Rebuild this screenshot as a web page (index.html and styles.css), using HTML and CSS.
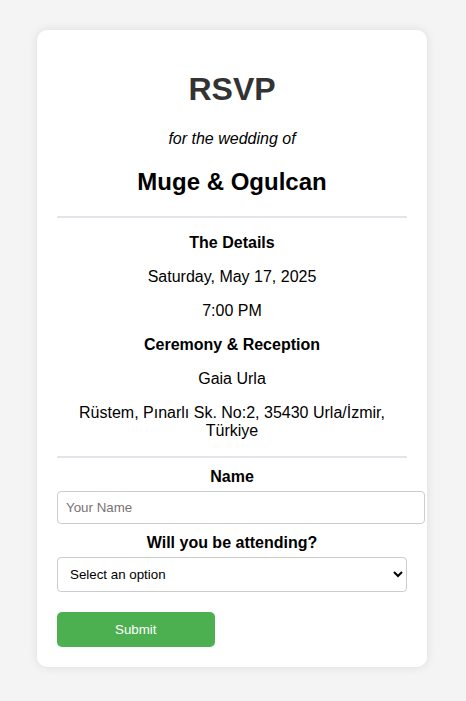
FILE: index.html
```html
<!DOCTYPE html>
<html lang="en">
<head>
<meta charset="utf-8">
<title>RSVP</title>
<link rel="stylesheet" href="styles.css">
</head>
<body>
<div class="card">
  <h1 class="title">RSVP</h1>
  <p class="sub">for the wedding of</p>
  <h2 class="names">Muge &amp; Ogulcan</h2>
  <hr class="rule">
  <p class="strong">The Details</p>
  <p>Saturday, May 17, 2025</p>
  <p>7:00 PM</p>
  <p class="strong">Ceremony &amp; Reception</p>
  <p>Gaia Urla</p>
  <p>Rüstem, Pınarlı Sk. No:2, 35430 Urla/İzmir, Türkiye</p>
  <hr class="rule rule-last">
  <form class="form">
    <label class="label" for="name">Name</label>
    <input class="input" id="name" type="text" placeholder="Your Name">
    <label class="label" for="attend">Will you be attending?</label>
    <select class="select" id="attend">
      <option>Select an option</option>
      <option>Yes</option>
      <option>No</option>
    </select>
    <button class="submit" type="button">Submit</button>
  </form>
</div>
</body>
</html>
```

FILE: styles.css
```css
html, body {
  margin: 0;
  padding: 0;
}
body {
  background: #f4f4f4;
  font-family: "Liberation Sans", Arial, sans-serif;
  color: #000;
  padding: 30px 0;
}
.card {
  width: 350px;
  margin: 0 auto;
  padding: 20px;
  background: #fff;
  border-radius: 10px;
  box-shadow: 0 0 10px rgba(0, 0, 0, 0.1);
  text-align: center;
  position: relative;
  left: -1px;
}
.card p {
  font-size: 16px;
  margin: 16px 0;
}
.title {
  font-size: 32px;
  color: #333;
  margin: 21.44px 0;
}
.sub {
  font-style: italic;
}
.names {
  font-size: 24px;
  margin: 19.92px 0;
}
.card p.strong {
  font-weight: bold;
}
.rule {
  border: 0;
  border-top: 2px solid #e2e5e9;
  margin: 8px 0;
  height: 0;
}
.card .rule-last {
  margin-bottom: 10.5px;
}
.form {
  margin: 0;
}
.label {
  display: block;
  font-weight: bold;
  font-size: 16px;
  margin-bottom: 5px;
}
.input {
  display: block;
  width: 100%;
  padding: 8px;
  margin: 0 0 10px;
  border: 1px solid #ccc;
  border-radius: 4px;
  font-family: "Liberation Sans", Arial, sans-serif;
  font-size: 13.333px;
}
.input::placeholder {
  color: #757575;
}
.select {
  display: block;
  width: 100%;
  padding: 8px;
  margin: 0 0 20px;
  border: 1px solid #ccc;
  border-radius: 4px;
  font-family: "Liberation Sans", Arial, sans-serif;
  font-size: 13.333px;
  background: #fff;
  color: #000;
}
.submit {
  display: block;
  width: 45%;
  padding: 10px 20px;
  border: 0;
  border-radius: 5px;
  background: #4caf50;
  color: #fff;
  font-family: "Liberation Sans", Arial, sans-serif;
  font-size: 13.333px;
}
```
